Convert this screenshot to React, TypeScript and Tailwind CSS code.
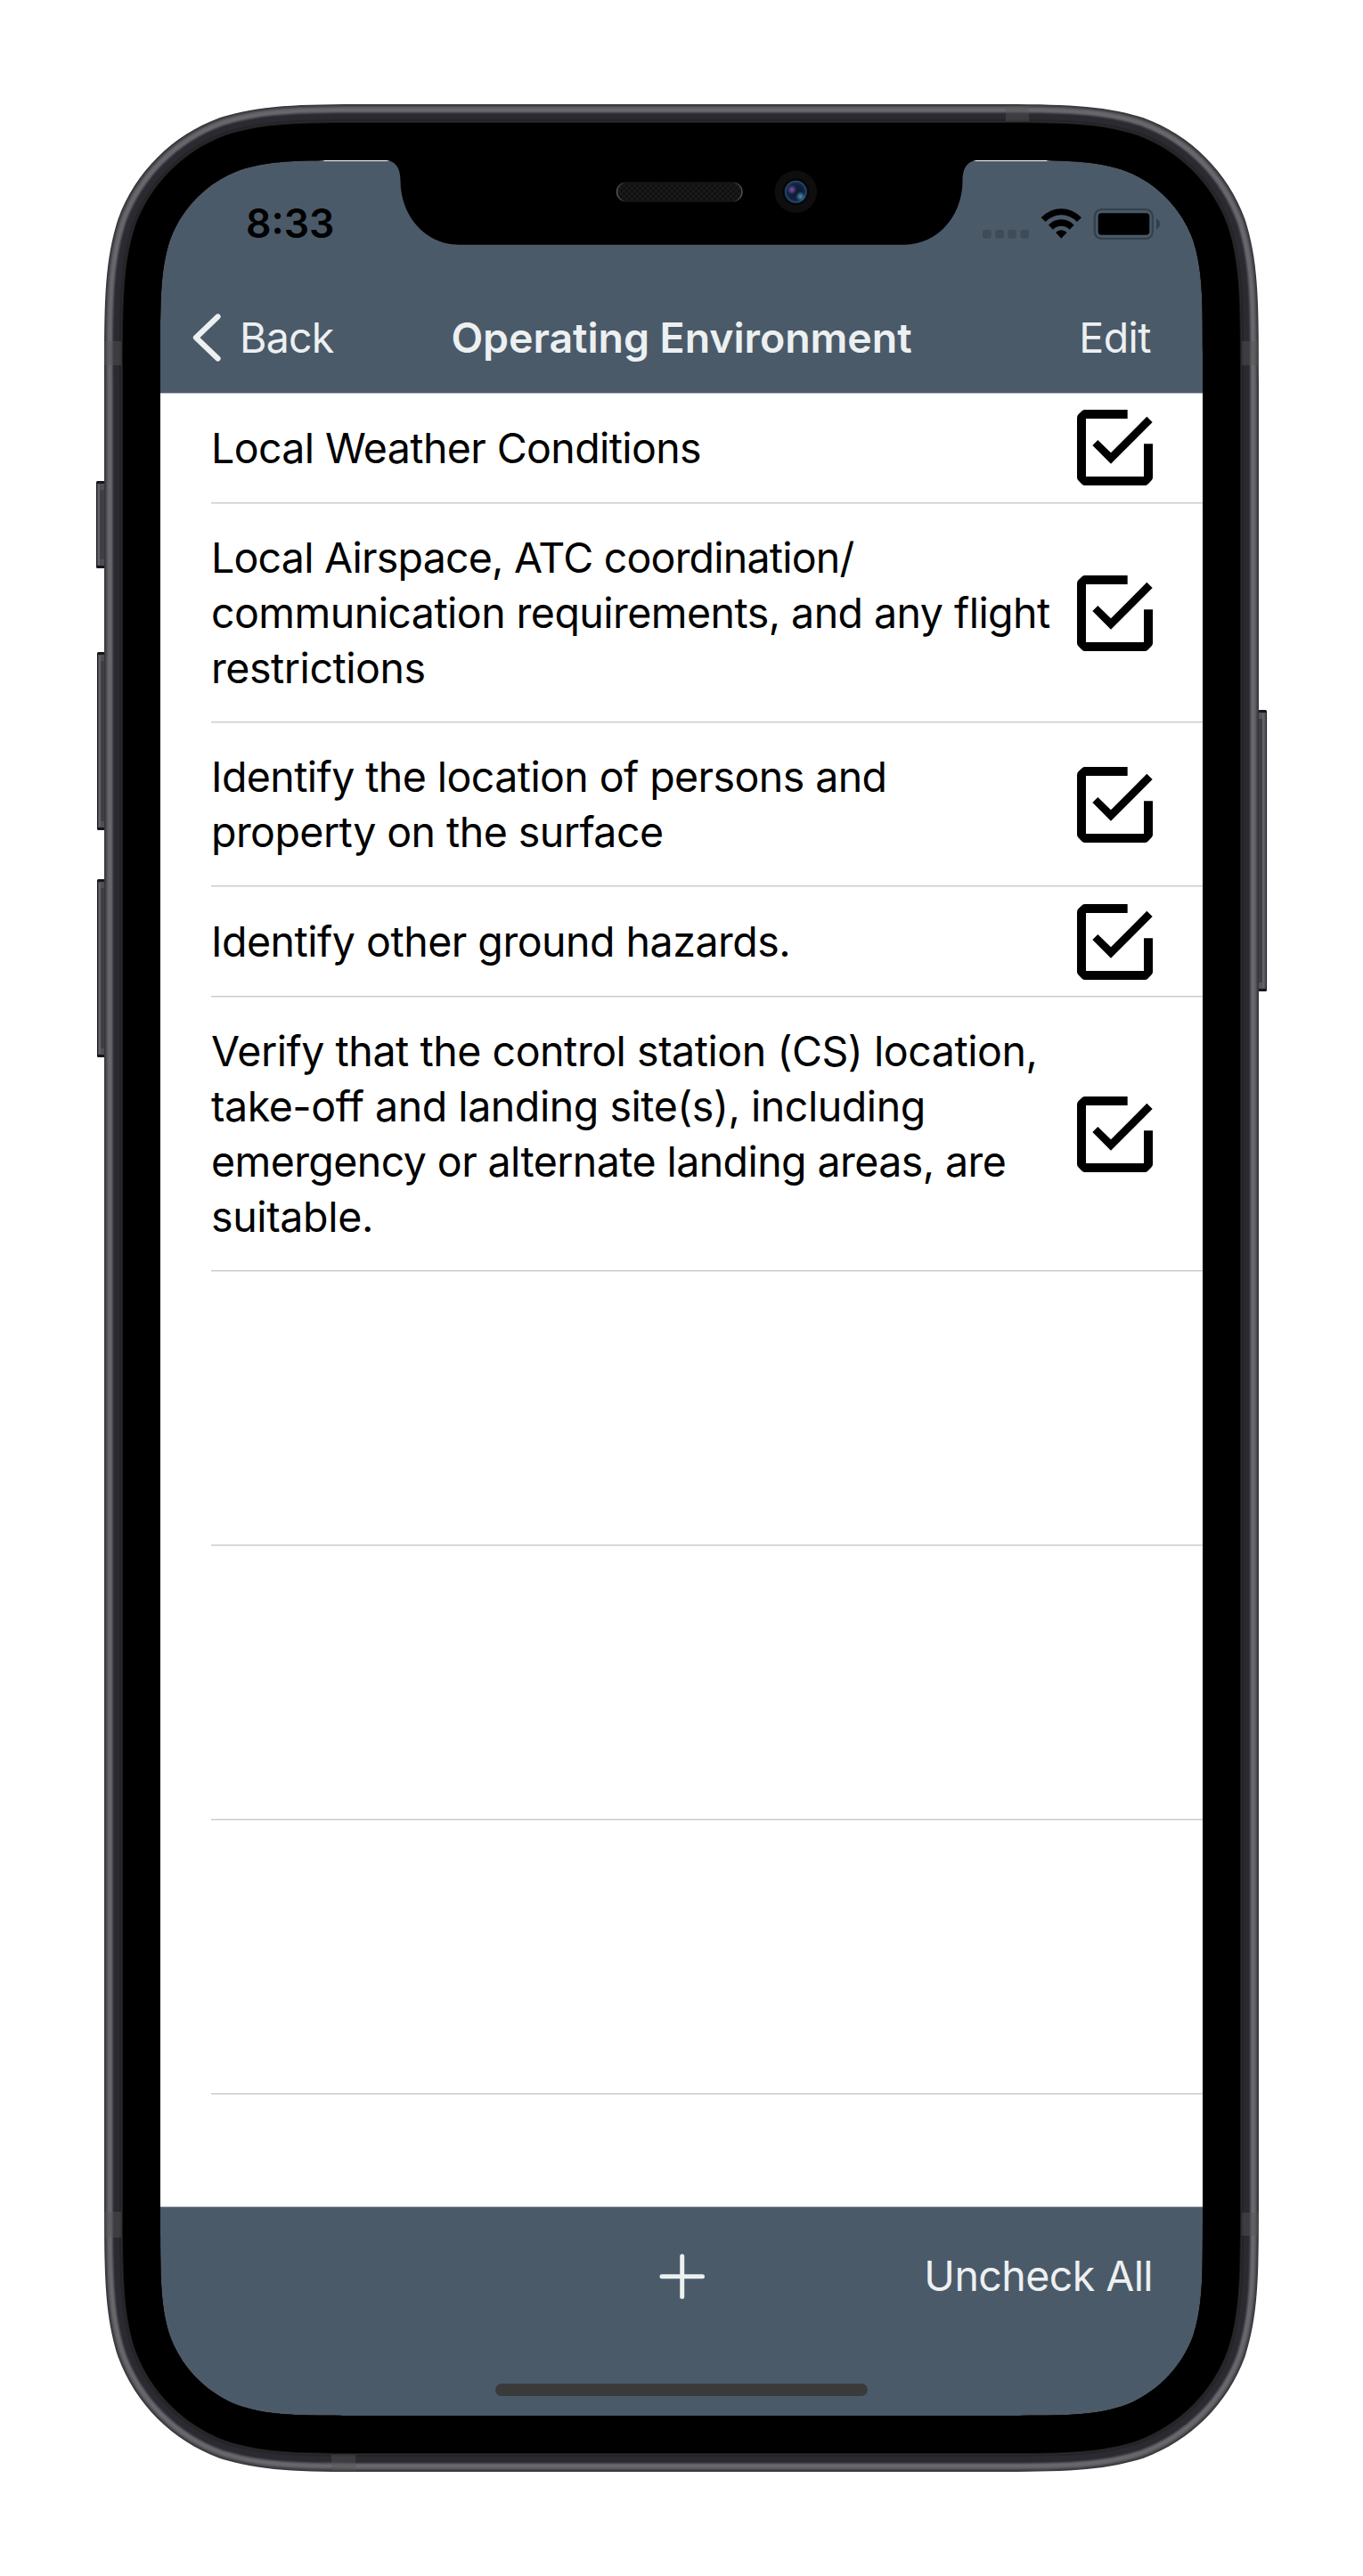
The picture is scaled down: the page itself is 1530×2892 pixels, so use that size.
type Line = [text: string, tracking: string];

const items: Line[][] = [
  [["Local Weather Conditions", "tracking-[-0.61px]"]],
  [
    ["Local Airspace, ATC coordination/", "tracking-[-0.78px]"],
    ["communication requirements, and any flight", "tracking-[-0.54px]"],
    ["restrictions", "tracking-[-0.45px]"],
  ],
  [
    ["Identify the location of persons and", "tracking-[-0.58px]"],
    ["property on the surface", "tracking-[-0.55px]"],
  ],
  [["Identify other ground hazards.", "tracking-[-0.49px]"]],
  [
    ["Verify that the control station (CS) location,", "tracking-[-0.45px]"],
    ["take-off and landing site(s), including", "tracking-[-0.45px]"],
    ["emergency or alternate landing areas, are", "tracking-[-0.58px]"],
    ["suitable.", "tracking-[-0.35px]"],
  ],
];

const rowHeights = ["h-[125px]", "h-[246px]", "h-[184px]", "h-[124px]", "h-[308px]"];

/** Rounded rectangle with continuous (superelliptic) corners. */
function smoothRect(x: number, y: number, w: number, h: number, r: number) {
  const X = x + w;
  const Y = y + h;
  const a = 1.52866 * r;
  const b = 1.08849 * r;
  const c = 0.86841 * r;
  const d = 0.63149 * r;
  const e = 0.37282 * r;
  const f = 0.16906 * r;
  const g = 0.07491 * r;
  return [
    `M${x + a} ${y}H${X - a}`,
    `C${X - b} ${y} ${X - c} ${y} ${X - d} ${y + g}`,
    `C${X - e} ${y + f} ${X - f} ${y + e} ${X - g} ${y + d}`,
    `C${X} ${y + c} ${X} ${y + b} ${X} ${y + a}`,
    `V${Y - a}`,
    `C${X} ${Y - b} ${X} ${Y - c} ${X - g} ${Y - d}`,
    `C${X - f} ${Y - e} ${X - e} ${Y - f} ${X - d} ${Y - g}`,
    `C${X - c} ${Y} ${X - b} ${Y} ${X - a} ${Y}`,
    `H${x + a}`,
    `C${x + b} ${Y} ${x + c} ${Y} ${x + d} ${Y - g}`,
    `C${x + e} ${Y - f} ${x + f} ${Y - e} ${x + g} ${Y - d}`,
    `C${x} ${Y - c} ${x} ${Y - b} ${x} ${Y - a}`,
    `V${y + a}`,
    `C${x} ${y + b} ${x} ${y + c} ${x + g} ${y + d}`,
    `C${x + f} ${y + e} ${x + e} ${y + f} ${x + d} ${y + g}`,
    `C${x + c} ${y} ${x + b} ${y} ${x + a} ${y}Z`,
  ].join("");
}

const ring = (inset: number) => smoothRect(117 + inset, 117 + inset, 1296 - 2 * inset, 2658 - 2 * inset, 205 - inset);
const screenPath = smoothRect(180, 180, 1170, 2532, 142);

const metal: [number, string][] = [
  [0, "#353439"], [1, "#404044"], [2, "#4a4a4f"], [3, "#5a595e"], [4, "#626167"], [5, "#68676c"],
  [8, "#5c5b60"], [9, "#47464c"], [10, "#35343a"], [11, "#2b2a31"], [17, "#242329"], [19, "#2d2d2b"], [20, "#1b1b1a"],
];

function SideButton({ x, y, w, h, flip }: { x: number; y: number; w: number; h: number; flip?: boolean }) {
  return (
    <g>
      <rect x={x} y={y} width={w} height={h} rx="1.5" fill="#17161d" />
      <rect x={x + (flip ? 0 : 1)} y={y + 3} width={w - 1} height={h - 6} fill={flip ? "#55545a" : "#4e4e54"} />
      <rect x={flip ? x : x + 4} y={y + 10} width={w - 4} height={h - 20} fill="#3f3e44" />
      <rect x={flip ? x + 5 : x + 2} y={y + 4} width="2" height={h - 8} fill="#636268" />
    </g>
  );
}

function DeviceFrame() {
  return (
    <svg className="pointer-events-none absolute inset-0" width="1530" height="2892" viewBox="0 0 1530 2892">
      <defs>
        <pattern id="mesh" width="6" height="6" patternUnits="userSpaceOnUse">
          <rect width="6" height="6" fill="#101010" />
          <rect width="3" height="3" fill="#1a1a1a" />
          <rect x="3" y="3" width="3" height="3" fill="#1a1a1a" />
        </pattern>
        <radialGradient id="lens">
          <stop offset="0" stopColor="#10162c" />
          <stop offset="0.75" stopColor="#13233f" />
          <stop offset="1" stopColor="#28507a" />
        </radialGradient>
        <radialGradient id="violet">
          <stop offset="0" stopColor="#7b54a8" />
          <stop offset="1" stopColor="#7b54a8" stopOpacity="0" />
        </radialGradient>
        <radialGradient id="teal">
          <stop offset="0" stopColor="#4793b4" />
          <stop offset="1" stopColor="#4793b4" stopOpacity="0" />
        </radialGradient>
        <linearGradient id="speakerEdge">
          <stop offset="0" stopColor="#555" />
          <stop offset="0.07" stopColor="#151515" />
          <stop offset="0.93" stopColor="#151515" />
          <stop offset="1" stopColor="#555" />
        </linearGradient>
      </defs>

      <SideButton x={108} y={540} w={10} h={98} />
      <SideButton x={109} y={732} w={9} h={200} />
      <SideButton x={109} y={987} w={9} h={200} />
      <SideButton x={1412} y={797} w={10} h={316} flip />

      {metal.map(([inset, color]) => (
        <path key={inset} d={ring(inset) + screenPath} fillRule="evenodd" fill={color} />
      ))}
      <g fill="#565656" fillOpacity="0.42">
        <rect x="117" y="383" width="19" height="27" />
        <rect x="1394" y="383" width="19" height="27" />
        <rect x="117" y="2483" width="19" height="29" />
        <rect x="1394" y="2484" width="19" height="26" />
        <rect x="1129" y="119" width="26" height="17" />
        <rect x="372" y="2756" width="27" height="18" />
      </g>
      <path d={ring(21) + screenPath} fillRule="evenodd" fill="#000" />

      {/* Notch with earpiece and front camera */}
      <path
        d="M431 179V180C443 180 449.5 187 449.5 203C449.5 243 478 274.7 515 274.7H1015C1052 274.7 1080.5 243 1080.5 203C1080.5 187 1087 180 1099 180V179Z"
        fill="#000"
      />
      <rect x="692.5" y="205" width="140.5" height="21" rx="10.5" fill="url(#mesh)" stroke="url(#speakerEdge)" strokeWidth="1.4" />
      <circle cx="893.3" cy="215.3" r="23.7" fill="#0e0e0e" />
      <circle cx="893.3" cy="215.3" r="15" fill="#060606" />
      <circle cx="893.3" cy="215.3" r="12.5" fill="url(#lens)" />
      <circle cx="889" cy="213" r="5.5" fill="url(#violet)" />
      <circle cx="898.5" cy="220.5" r="5.5" fill="url(#teal)" />
    </svg>
  );
}

function StatusIcons() {
  return (
    <svg width="199.3" height="35" viewBox="128 70 598 105">
      <g fill="#3f4b57">
        <rect x="128" y="142" width="29" height="29" rx="7" />
        <rect x="170.500" y="142" width="29" height="29" rx="7" />
        <rect x="213" y="142" width="29" height="29" rx="7" />
        <rect x="255.500" y="142" width="29" height="29" rx="7" />
      </g>
      <path d="M325 101Q355 71 393 71T461 101L446 115Q422 92 393 92T340 115Z" fill="#000" />
      <path d="M350 126Q369 107 393 107T436 126L421 141Q409 129 393 129T365 141Z" fill="#000" />
      <path d="M374 151Q383 143 393 143T412 151L393 171Z" fill="#000" />
      <rect x="505.500" y="73.500" width="195" height="98" rx="23" fill="none" stroke="#34404b" strokeWidth="7" />
      <rect x="517" y="86" width="173" height="73" rx="11" fill="#000" />
      <path d="M713 104C730 112 730 133 713 141Z" fill="#34404b" />
    </svg>
  );
}

function CheckedBox() {
  return (
    <svg width="85" height="85" viewBox="0 0 255 255" className="shrink-0">
      <path
        d="M170 0H27Q21 0 17 4L5 15Q0 20 0 27V228Q0 234 4 238L17 251Q21 255 27 255H228Q234 255 238 251L251 238Q255 234 255 228V115H225V225H30V30H170Z"
        fill="#000"
      />
      <path d="M52 120L70 102L114 145L235 23L254 42L114 182Z" fill="#000" />
    </svg>
  );
}

export default function App() {
  return (
    <div className="relative flex h-[2892px] w-[1530px] justify-center bg-white font-[Inter,sans-serif] text-[46.5px] leading-[62px] text-black">
      <div className="mt-[180px] flex h-[2532px] w-[1170px] flex-col bg-white">
        <header className="h-[261px] border-t border-white bg-[#4b5a69]">
          <div className="flex h-[141px] items-center justify-between pl-[96px] pr-[48px]">
            <span className="text-[44.5px] font-semibold leading-none">8:33</span>
            <StatusIcons />
          </div>
          <nav className="grid h-[114px] grid-cols-[1fr_auto_1fr] items-center text-[#ecf0f1]">
            <div className="flex items-center gap-[21px] pl-[36px]">
              <svg width="32" height="54" viewBox="0 0 32 54" fill="none" stroke="#ecf0f1" strokeWidth="6.200" strokeLinecap="round" strokeLinejoin="round">
                <path d="M28.500 3.500L4 27L28.500 50.500" />
              </svg>
              <span className="tracking-[-0.75px]">Back</span>
            </div>
            <h1 className="font-semibold tracking-[-0.07px]">Operating Environment</h1>
            <div className="pr-[58px] text-right tracking-[-0.55px]">Edit</div>
          </nav>
        </header>

        <main className="flex-1 pl-[57px] shadow-[inset_0_1px_0_#b9bcbf]">
          {items.map((lines, i) => (
            <div
              key={i}
              className={`flex items-center justify-between pb-[2px] pr-[56px] shadow-[inset_0_-1px_0_#ebebec,inset_0_-2px_0_#c8c8ca] ${rowHeights[i]}`}
            >
              <p className="whitespace-nowrap">
                {lines.map(([text, tracking]) => (
                  <span key={text} className={`block ${tracking}`}>{text}</span>
                ))}
              </p>
              <CheckedBox />
            </div>
          ))}
          {[0, 1, 2].map((i) => (
            <div key={i} className="h-[308px] shadow-[inset_0_-1px_0_#ebebec,inset_0_-2px_0_#c8c8ca]" />
          ))}
        </main>

        <footer className="h-[235px] border-t border-[#b0b4b6] bg-[#4b5a69] text-[#ecf0f1]">
          <div className="grid h-[154px] grid-cols-[1fr_auto_1fr] items-center">
            <div />
            <svg width="52" height="52" viewBox="0 0 52 52" stroke="#ecf0f1" strokeWidth="5" strokeLinecap="round">
              <path d="M26.700 4V49.500M4 26.700H49.500" />
            </svg>
            <div className="pr-[56px] text-right tracking-[-0.58px]">Uncheck All</div>
          </div>
          <div className="mx-auto mt-[44px] h-[14px] w-[418px] rounded-full bg-[#3a3a3a]" />
        </footer>
      </div>
      <DeviceFrame />
    </div>
  );
}
